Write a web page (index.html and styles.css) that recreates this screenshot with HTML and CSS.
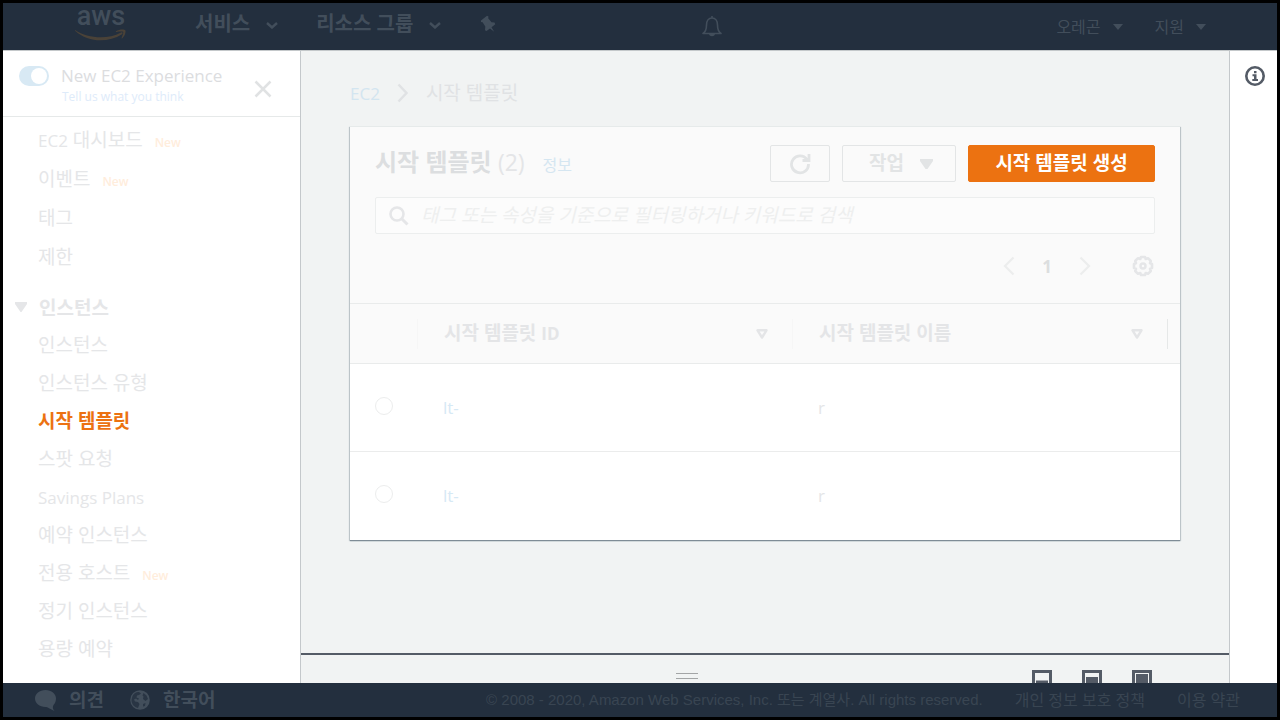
FILE: index.html
```
<!DOCTYPE html>
<html lang="ko">
<head>
    <meta charset="UTF-8">
    <meta name="viewport" content="width=device-width, initial-scale=1.0">
    <title>시작 템플릿 | EC2</title>
    <link rel="stylesheet" href="styles.css">
</head>
<body>
    <!-- Top navigation -->
    <header class="topbar">
        <a href="#" class="logo">
            <span class="logo-text">aws</span>
            <svg class="logo-smile" width="52" height="13" viewBox="0 0 52 13">
                <path d="M0 1C13 9.500 32 11 46 3.500c1.500-.6 2.300.6 1 1.700C33 14 13 13.500.3 2 0 1.500-.3 1 0 1z" fill="#4a4238"/>
                <path d="M41 2.200c3-2 8.500-2 9.300-1s-.2 5.500-3 8c-.5.400-.9.200-.7-.3 1-2.500 2-5 1.600-5.800s-4-.5-6.800-.2c-.6 0-.8-.3-.4-.7z" fill="#4a4238"/>
            </svg>
        </a>
        <nav class="menu">
            <button class="menu-button">서비스
                <svg width="12" height="7" viewBox="0 0 12 7"><path d="M1 1l5 4.500L11 1" fill="none" stroke="currentColor" stroke-width="2.400"/></svg>
            </button>
            <button class="menu-button">리소스 그룹
                <svg width="12" height="7" viewBox="0 0 12 7"><path d="M1 1l5 4.500L11 1" fill="none" stroke="currentColor" stroke-width="2.400"/></svg>
            </button>
            <button class="icon-button" aria-label="고정">
                <svg width="18" height="18" viewBox="0 0 18 18"><path d="M2 5.500L8 .8l1.500.7-.3 1.700 3.300 4 3 .3.800 1.800-3.800 3 2.700 4.500-4.200-3.400L7.500 16 6 15.300l.3-3.800L3.600 7.300 2 7z" fill="currentColor"/></svg>
            </button>
        </nav>
        <div class="account">
            <button class="icon-button bell" aria-label="알림">
                <svg width="20" height="22" viewBox="0 0 20 22"><path d="M1 18.500c3-2 3.500-4 3.500-8.500 0-4 2-7 5.500-7s5.500 3 5.500 7c0 4.500.5 6.500 3.500 8.500zM10 1v2" fill="none" stroke="currentColor" stroke-width="1.600" stroke-linejoin="round"/><path d="M7 19h6c-.5 3-5.500 3-6 0z" fill="currentColor"/></svg>
            </button>
            <button class="small-button">오레곤
                <svg width="10" height="6" viewBox="0 0 10 6"><path d="M0 0h10L5 6z" fill="currentColor"/></svg>
            </button>
            <button class="small-button">지원
                <svg width="10" height="6" viewBox="0 0 10 6"><path d="M0 0h10L5 6z" fill="currentColor"/></svg>
            </button>
        </div>
    </header>

    <div class="layout">
        <!-- Sidebar -->
        <aside class="sidebar">
            <div class="experience">
                <input type="checkbox" class="toggle" id="new-experience" checked>
                <div class="experience-text">
                    <label for="new-experience">New EC2 Experience</label>
                    <a href="#">Tell us what you think</a>
                </div>
                <button class="close" aria-label="닫기">
                    <svg width="18" height="18" viewBox="0 0 18 18"><path d="M1.500 1.500l15 15M16.500 1.500l-15 15" stroke="currentColor" stroke-width="2.500"/></svg>
                </button>
            </div>
            <ul class="nav-list nav-top">
                <li><a href="#"><span class="latin">EC2</span> 대시보드</a> <span class="new">New</span></li>
                <li><a href="#">이벤트</a> <span class="new">New</span></li>
                <li><a href="#">태그</a></li>
                <li><a href="#">제한</a></li>
            </ul>
            <button class="nav-group">
                <svg width="12" height="10" viewBox="0 0 12 10"><path d="M0 0h12v2L6.500 10h-1L0 2z" fill="currentColor"/></svg>
                인스턴스
            </button>
            <ul class="nav-list">
                <li><a href="#">인스턴스</a></li>
                <li><a href="#">인스턴스 유형</a></li>
                <li><a href="#" class="current">시작 템플릿</a></li>
                <li><a href="#">스팟 요청</a></li>
                <li><a href="#" class="latin">Savings Plans</a></li>
                <li><a href="#">예약 인스턴스</a></li>
                <li><a href="#">전용 호스트</a> <span class="new">New</span></li>
                <li><a href="#">정기 인스턴스</a></li>
                <li><a href="#">용량 예약</a></li>
            </ul>
        </aside>

        <!-- Content -->
        <main class="main">
            <div class="content">
                <nav class="breadcrumb">
                    <a href="#">EC2</a>
                    <svg width="12" height="20" viewBox="0 0 12 20"><path d="M1.500 1.500l8 8.500-8 8.500" fill="none" stroke="currentColor" stroke-width="2.500"/></svg>
                    <span>시작 템플릿</span>
                </nav>

                <section class="card">
                    <div class="card-header">
                        <div class="title-row">
                            <h1>시작 템플릿 <span class="count">(2)</span></h1>
                            <a href="#" class="info-link">정보</a>
                            <div class="actions">
                                <button class="btn btn-refresh" aria-label="새로 고침">
                                    <svg width="22" height="22" viewBox="0 0 22 22"><path d="M18 6.500A8.500 8.500 0 1 0 19.500 11M20 1v6.500h-6.500" fill="none" stroke="currentColor" stroke-width="2.800"/></svg>
                                </button>
                                <button class="btn btn-menu"><span>작업</span>
                                    <svg width="13" height="10" viewBox="0 0 13 10"><path d="M0 0h13v2L7.500 10h-2L0 2z" fill="currentColor"/></svg>
                                </button>
                                <button class="btn btn-primary"><span>시작 템플릿 생성</span></button>
                            </div>
                        </div>
                        <div class="search">
                            <svg width="20" height="20" viewBox="0 0 20 20"><circle cx="8" cy="8" r="6.500" fill="none" stroke="currentColor" stroke-width="2.600"/><path d="M12.500 12.500l6 6" stroke="currentColor" stroke-width="3"/></svg>
                            <input type="text" aria-label="검색" placeholder="태그 또는 속성을 기준으로 필터링하거나 키워드로 검색">
                        </div>
                        <div class="pagination">
                            <button class="page-arrow" aria-label="이전 페이지">
                                <svg width="12" height="20" viewBox="0 0 12 20"><path d="M10.500 1.500l-8.500 8.500 8.500 8.500" fill="none" stroke="currentColor" stroke-width="2.200"/></svg>
                            </button>
                            <button class="page-number">1</button>
                            <button class="page-arrow" aria-label="다음 페이지">
                                <svg width="12" height="20" viewBox="0 0 12 20"><path d="M1.500 1.500l8.500 8.500-8.500 8.500" fill="none" stroke="currentColor" stroke-width="2.200"/></svg>
                            </button>
                            <button class="settings" aria-label="기본 설정">
                                <svg width="22" height="22" viewBox="0 0 22 22"><path d="M9 2h4l.7 2 2.300-.8 2.800 2.800-.8 2.300 2 .7v4l-2 .7.8 2.300-2.800 2.800-2.300-.8-.7 2H9l-.7-2-2.300.8L3.200 16l.8-2.300-2-.7V9l2-.7L3.200 6 6 3.200l2.300.8z" fill="none" stroke="currentColor" stroke-width="2.600" stroke-linejoin="round"/><circle cx="11" cy="11" r="2.500" fill="none" stroke="currentColor" stroke-width="2.500"/></svg>
                            </button>
                        </div>
                    </div>

                    <table>
                        <thead>
                            <tr>
                                <th class="col-select"><div class="th-inner"></div></th>
                                <th><div class="th-inner">
                                    <span class="th-label">시작 템플릿 <span class="latin">ID</span></span>
                                    <svg width="12" height="10" viewBox="0 0 12 10"><path d="M1.500 1.300h9L6 8.500z" fill="none" stroke="currentColor" stroke-width="2.400" stroke-linejoin="round"/></svg>
                                </div></th>
                                <th><div class="th-inner last">
                                    <span class="th-label">시작 템플릿 이름</span>
                                    <svg width="12" height="10" viewBox="0 0 12 10"><path d="M1.500 1.300h9L6 8.500z" fill="none" stroke="currentColor" stroke-width="2.400" stroke-linejoin="round"/></svg>
                                </div></th>
                                <th class="col-end"></th>
                            </tr>
                        </thead>
                        <tbody>
                            <tr>
                                <td class="select"><input type="radio" name="template" aria-label="템플릿 1 선택"></td>
                                <td><a href="#">lt-</a></td>
                                <td>r</td>
                                <td></td>
                            </tr>
                            <tr>
                                <td class="select"><input type="radio" name="template" aria-label="템플릿 2 선택"></td>
                                <td><a href="#">lt-</a></td>
                                <td>r</td>
                                <td></td>
                            </tr>
                        </tbody>
                    </table>
                </section>
            </div>

            <!-- Split panel -->
            <div class="split-panel">
                <div class="handle"></div>
                <div class="panel-sizes">
                    <button class="icon-button" aria-label="작게">
                        <svg width="20" height="20" viewBox="0 0 20 20"><path d="M1.500 1.500h17v17h-17z" fill="none" stroke="currentColor" stroke-width="3"/><path d="M4 10.500h12V16H4z" fill="currentColor"/></svg>
                    </button>
                    <button class="icon-button" aria-label="중간">
                        <svg width="20" height="20" viewBox="0 0 20 20"><path d="M1.500 1.500h17v17h-17z" fill="none" stroke="currentColor" stroke-width="3"/><path d="M4 7h12v9H4z" fill="currentColor"/></svg>
                    </button>
                    <button class="icon-button" aria-label="크게">
                        <svg width="20" height="20" viewBox="0 0 20 20"><path d="M1.500 1.500h17v17h-17z" fill="none" stroke="currentColor" stroke-width="3"/><path d="M4 4h12v12H4z" fill="currentColor"/></svg>
                    </button>
                </div>
            </div>
        </main>

        <aside class="info-bar">
            <button class="icon-button" aria-label="정보">
                <svg width="20" height="20" viewBox="0 0 20 20"><circle cx="10" cy="10" r="8.700" fill="none" stroke="currentColor" stroke-width="2.600"/><path d="M9 5h2.500v2.200H9zM7.500 8.200h4v4.800H13v2H7.300v-2H9v-2.800H7.500z" fill="currentColor"/></svg>
            </button>
        </aside>
    </div>

    <!-- Footer -->
    <footer class="footer">
        <a href="#" class="footer-main">
            <svg width="21" height="22" viewBox="0 0 21 22"><path d="M10.500 1C4.500 1 0 5 0 9.500S4.500 18 10.500 18c1 0 2 0 3 1l6 3c-2-2-2-4-1-6 1.500-1.500 2.500-4 2.500-6.500C21 5 16.500 1 10.500 1z" fill="currentColor"/></svg>
            의견
        </a>
        <a href="#" class="footer-main">
            <svg width="20" height="20" viewBox="0 0 20 20"><circle cx="10" cy="10" r="9.800" fill="currentColor"/><path d="M2.500 6C4 3 7 1.500 9 2l2 1.500-2 1.500-2 .500-.5 2 2.500 1-1 1.500-2-1.500-2 1 1 2 3 .5 1.500 2-1.500 4C4 17 1.500 14 1.500 10zM13.500 3l3 2.500L18 9l-2.500 2-2.500-2 .5-2.500-1-1zM13 14l2.500-1-.5 3-2 .5z" fill="#232f3e" opacity=".8"/></svg>
            한국어
        </a>
        <div class="legal">
            <span class="copyright">© 2008 - 2020, Amazon Web Services, Inc. 또는 계열사. All rights reserved.</span>
            <a href="#">개인 정보 보호 정책</a>
            <a href="#">이용 약관</a>
        </div>
    </footer>
</body>
</html>
```
FILE: styles.css
```
* {
    box-sizing: border-box;
}

body {
    margin: 0;
    height: 100vh;
    border: 3px solid #000;
    display: flex;
    flex-direction: column;
    font-family: "Open Sans", "Noto Sans CJK KR", sans-serif;
    font-size: 19px;
    color: #e5e6e8;
    background-color: #fff;
}

button, input {
    font-family: inherit;
    font-size: inherit;
    color: inherit;
}

button {
    background: none;
    border: none;
    padding: 0;
    cursor: pointer;
}

a {
    color: inherit;
    text-decoration: none;
}

svg {
    display: block;
    flex: none;
}

.latin {
    font-size: 17px;
}

/* Top navigation */
.topbar {
    flex: none;
    height: 48px;
    display: flex;
    align-items: flex-start;
    padding: 0 71px 0 72px;
    color: #424e5b;
    background-color: #232f3e;
    border-bottom: 1px solid #c4c8ca;
}

.logo {
    width: 52px;
    margin-right: 68px;
    text-align: center;
}

.logo-text {
    display: block;
    font-family: Roboto, sans-serif;
    font-size: 27px;
    font-weight: 500;
    line-height: 26px;
}

.menu, .account {
    display: flex;
    align-items: center;
}

.menu {
    gap: 38px;
    height: 38px;
}

.menu-button {
    display: flex;
    align-items: center;
    gap: 16px;
    font-size: 20px;
    font-weight: bold;
}

.menu-button svg, .small-button svg {
    margin-top: 6px;
}

.icon-button svg {
    margin-top: 0;
}

.menu .icon-button {
    padding-top: 4px;
}

.account {
    height: 45px;
    margin-left: auto;
    gap: 32px;
}

.bell {
    margin-right: 302px;
}

.small-button {
    display: flex;
    align-items: center;
    gap: 12px;
    font-size: 16px;
}

.small-button svg {
    margin-top: 2px;
}

.layout {
    flex: 1;
    min-height: 0;
    display: flex;
}

/* Sidebar */
.sidebar {
    flex: none;
    width: 297px;
    overflow: hidden;
}

.experience {
    display: flex;
    height: 66px;
    padding: 15px 28px 0 16px;
    border-bottom: 1px solid #e6e9e9;
}

.toggle {
    appearance: none;
    width: 30px;
    height: 20px;
    margin: 0 12px 0 0;
    padding: 2px;
    border-radius: 10px;
    background-color: #d8e9f4;
    display: flex;
    justify-content: flex-end;
}

.toggle::before {
    content: "";
    width: 16px;
    height: 16px;
    border-radius: 50%;
    background-color: #fff;
}

.experience-text {
    display: flex;
    flex-direction: column;
    flex: 1;
    font-size: 17px;
    line-height: 20px;
    color: #dcdddf;
}

.experience-text a {
    padding-left: 1px;
    font-size: 12px;
    line-height: 22px;
    color: #deebfa;
}

.close {
    height: 46px;
    color: #e0e2e3;
}

.nav-list {
    list-style: none;
    margin: 0;
    padding: 0 0 0 35px;
}

.nav-list li {
    height: 38px;
    line-height: 38px;
}

.nav-top {
    display: grid;
    gap: 1px;
    padding-top: 4px;
}

.nav-group {
    display: flex;
    align-items: center;
    gap: 12px;
    height: 38px;
    margin-top: 12px;
    padding-left: 12px;
    font-weight: bold;
}

.new {
    margin-left: 7px;
    font-size: 12px;
    font-weight: 600;
    color: #ffeddc;
}

.current {
    font-weight: bold;
    color: #ec7211;
}

/* Content */
.main {
    flex: 1;
    min-width: 0;
    display: flex;
    flex-direction: column;
    background-color: #f1f3f3;
    border-left: 1px solid #c4c8cb;
    border-right: 1px solid #c4c8cb;
}

.content {
    flex: 1;
    padding: 25px 49px 0;
}

.breadcrumb {
    display: flex;
    align-items: center;
    gap: 17px;
    height: 34px;
    margin-bottom: 16px;
    color: #e0e2e4;
}

.breadcrumb span {
    padding-bottom: 2px;
}

.breadcrumb a {
    font-size: 17px;
    color: #d3e5f0;
}

.card {
    background-color: #fff;
    border-top: 1px solid #e6eaea;
    box-shadow: 0 1px 1px #7f8c96, 1px 1px 1px #c9cfd3, -1px 1px 1px #c9cfd3;
}

.card-header {
    height: 176px;
    padding: 18px 25px 0;
    background-color: #fafafa;
}

.title-row {
    display: flex;
    align-items: center;
    height: 37px;
}

h1 {
    margin: 0;
    font-size: 24px;
    line-height: 34px;
    padding-bottom: 3px;
    color: #dcdee0;
}

.count {
    font-size: 23px;
    font-weight: normal;
    color: #e4e5e7;
}

.info-link {
    margin-left: 18px;
    font-size: 16px;
    color: #d5e6f1;
}

.actions {
    display: flex;
    gap: 12px;
    margin-left: auto;
}

.btn {
    display: flex;
    align-items: center;
    justify-content: center;
    height: 37px;
    padding: 0 26px;
    border: 1px solid #e3e5e6;
    border-radius: 2px;
    font-weight: bold;
    color: #e2e4e5;
}

.btn span, .th-label {
    padding-bottom: 4px;
}

.btn-refresh {
    width: 60px;
    padding: 0;
}

.btn-menu {
    gap: 16px;
    padding: 0 22px 0 26px;
}

.btn-primary {
    min-width: 187px;
    color: #fff;
    background-color: #ec7211;
    border-color: #ec7211;
}

.search {
    display: flex;
    align-items: center;
    gap: 12px;
    height: 37px;
    margin-top: 15px;
    padding: 0 13px;
    border: 1px solid #eceeee;
    border-radius: 2px;
    background-color: #fcfcfc;
}

.search input {
    flex: 1;
    height: 35px;
    padding: 0 0 2px;
    border: none;
    background: none;
    outline: none;
}

.search input::placeholder {
    font-style: italic;
    color: #eeefef;
    opacity: 1;
}

.pagination {
    display: flex;
    align-items: center;
    justify-content: flex-end;
    gap: 27px;
    height: 64px;
    padding-right: 1px;
}

.page-arrow {
    color: #eceded;
}

.page-number {
    font-size: 17px;
    font-weight: bold;
    color: #dcdedf;
}

.settings {
    margin-left: 14px;
}

table {
    width: 100%;
    table-layout: fixed;
    border-collapse: collapse;
}

th {
    height: 60px;
    padding: 0;
    text-align: left;
    background-color: #fafafa;
    border-top: 1px solid #e9ebeb;
    border-bottom: 1px solid #e9ebeb;
    color: #e4e5e7;
}

.th-inner {
    display: flex;
    align-items: center;
    justify-content: space-between;
    height: 30px;
    padding: 0 24px 0 26px;
    border-right: 1px solid #f6f6f6;
}

.th-inner.last {
    border-color: #e6e8e8;
}

.col-select {
    width: 68px;
}

.col-end {
    width: 12px;
}

td {
    height: 88px;
    padding: 0 25px;
    font-size: 17px;
    color: #e4e5e7;
}

td a {
    color: #d6e9f5;
}

tbody tr + tr td {
    border-top: 1px solid #ebecec;
}

.select {
    padding-bottom: 3px;
}

.select input {
    appearance: none;
    display: block;
    width: 18px;
    height: 18px;
    margin: 0;
    border: 1px solid #eceded;
    border-radius: 50%;
}

/* Split panel */
.split-panel {
    flex: none;
    display: flex;
    height: 30px;
    padding: 15px 77px 0 0;
    overflow: hidden;
    color: #545b66;
    border-top: 2px solid #545b66;
}

.handle {
    width: 22px;
    height: 6px;
    margin: 3px 334px 0 auto;
    border-top: 1px solid #a3a5a6;
    border-bottom: 1px solid #a3a5a6;
}

.panel-sizes {
    display: flex;
    align-items: flex-start;
    gap: 30px;
}

.info-bar {
    flex: none;
    width: 47px;
    padding: 15px 0 0 15px;
    color: #545b66;
}

/* Footer */
.footer {
    flex: none;
    display: flex;
    align-items: center;
    gap: 26px;
    height: 34px;
    padding: 0 37px 0 32px;
    background-color: #232f3e;
    color: #424e5b;
}

.footer-main {
    display: flex;
    align-items: center;
    gap: 13px;
    line-height: 32px;
    font-weight: bold;
}

.legal {
    display: flex;
    gap: 32px;
    margin-left: auto;
    font-size: 16px;
    line-height: 34px;
    color: #394552;
}

.copyright {
    font-family: "Liberation Sans", "Noto Sans CJK KR", sans-serif;
    font-size: 15px;
}
```
